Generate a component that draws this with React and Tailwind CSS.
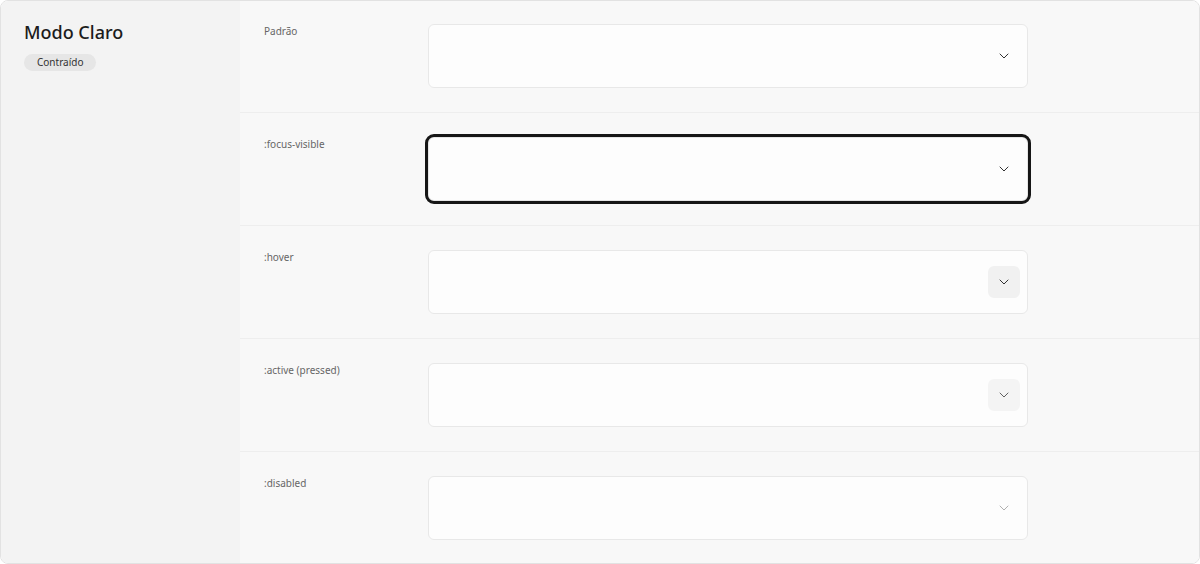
import React from "react";
import { ChevronDown } from "lucide-react";

const rows = [
	{ label: "Padrão", state: "default" },
	{ label: ":focus-visible", state: "focus" },
	{ label: ":hover", state: "hover" },
	{ label: ":active (pressed)", state: "active" },
	{ label: ":disabled", state: "disabled" },
];

function SelectBox({ state }) {
	const boxClass =
		state === "focus"
			? "border-[#e6e6e6] outline-[3px] outline-[#161616]"
			: "border-[#e8e8e8]";

	const btnClass =
		state === "hover"
			? "bg-[#f1f1f1] text-[#222]"
			: state === "active"
			? "bg-[#f4f4f4] text-[#555]"
			: state === "disabled"
			? "text-[#aaa]"
			: "text-[#222]";

	return (
		<div
			className={`flex h-16 w-[600px] items-center justify-end rounded-md border bg-[#fdfdfd] pr-[7px] ${boxClass}`}
		>
			<div className={`flex h-8 w-8 items-center justify-center rounded-md ${btnClass}`}>
				<ChevronDown size={16} strokeWidth={1.4} />
			</div>
		</div>
	);
}

export default function App() {
	return (
		<div className="h-[564px] w-[1200px] font-['Noto_Sans',sans-serif]">
			<div className="flex h-full overflow-hidden rounded-lg border border-[#e2e2e2]">
				{/* sidebar */}
				<div className="w-[239px] shrink-0 bg-[#f3f3f3] px-[23px] pt-[19px]">
					<h1 className="text-[18px] font-medium leading-6 text-[#1c1c1c]">Modo Claro</h1>
					<span className="mt-[10px] inline-block rounded-full bg-[#e6e6e6] px-[13px] py-[1px] text-[10px] leading-[15px] text-[#333]">
						Contraído
					</span>
				</div>

				{/* states */}
				<div className="flex-1 bg-[#f8f8f8]">
					{rows.map((row, i) => (
						<div
							key={row.label}
							className={`flex shrink-0 items-start px-6 ${
								i === 0 ? "h-[112px] pt-[23px]" : "h-[113px] pt-6"
							} ${i < rows.length - 1 ? "border-b border-[#eeeeee]" : ""}`}
						>
							<div className="w-[164px] shrink-0 text-[10px] leading-[14px] text-[#666]">
								{row.label}
							</div>
							<SelectBox state={row.state} />
						</div>
					))}
				</div>
			</div>
		</div>
	);
}
